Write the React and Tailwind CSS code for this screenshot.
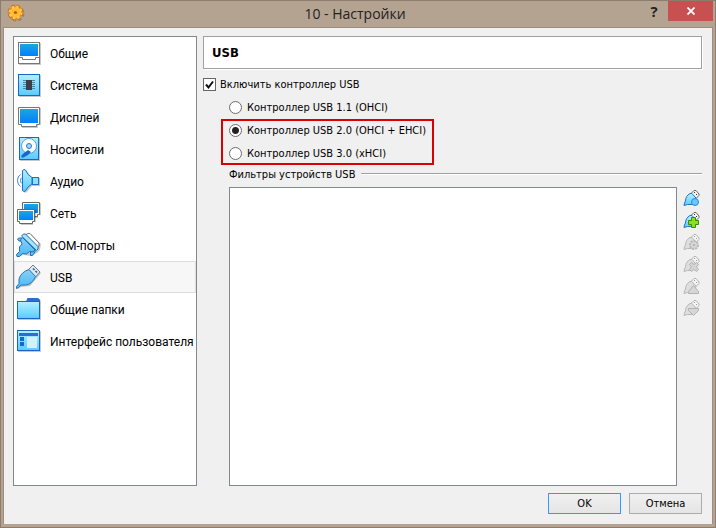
import { useState } from 'react'

function Shadow({ children }) {
  return <g transform="translate(1 1)" fill="#000" opacity="0.22">{children}</g>
}

function GeneralIcon() {
  return (
    <>
      <Shadow><rect x="2" y="2" width="22" height="22" /></Shadow>
      <rect x="2.5" y="2.5" width="21" height="21" fill="#fff" stroke="#777" />
      <rect x="4" y="4" width="18" height="12" fill="url(#screen)" />
      <path d="M3 17.5h3.5v2h13v-2H23" fill="none" stroke="#777" />
    </>
  )
}

function SystemIcon() {
  return (
    <>
      <Shadow><rect x="2" y="2" width="22" height="22" /></Shadow>
      <rect x="2.5" y="2.5" width="21" height="21" fill="url(#cyan)" stroke="#1668c9" />
      <path d="M7 8.5h12M7 10.5h12M7 12.5h12M7 14.5h12M7 16.5h12" stroke="#4e87a6" />
      <rect x="10" y="8" width="6" height="10" fill="#3a3f4a" />
    </>
  )
}

function DisplayIcon() {
  return (
    <>
      <Shadow><path d="M2 3h22v17h-3v3H5v-3H2z" /></Shadow>
      <path d="M2.5 3.5h21v17h-3v2h-15v-2h-3z" fill="#fff" stroke="#777" />
      <rect x="4" y="5" width="18" height="14" fill="url(#screen)" />
    </>
  )
}

function StorageIcon() {
  return (
    <>
      <Shadow><rect x="3" y="1" width="20" height="23" /></Shadow>
      <rect x="3.5" y="1.5" width="19" height="22" fill="url(#cyan)" stroke="#1668c9" />
      <circle cx="13" cy="10" r="7.5" fill="#fff" stroke="#5b9fe0" />
      <path d="m12 14 3 2-3 3-4.500 2.500H5.500v-2L8 17z" fill="#1668c9" />
      <circle cx="13" cy="10" r="2.5" fill="#9fd8f7" stroke="#2b7bd0" />
    </>
  )
}

function AudioIcon() {
  return (
    <>
      <Shadow><path d="M7 1.500h2.500L15 9h8v8h-8l-5.500 6.500H7z" /></Shadow>
      <path d="M4.500 6.500Q1.500 8.500 1.500 12.500T4.500 18.500M6 9.500q-1.500 1-1.500 3t1.500 3" fill="none" stroke="#3a86d8" />
      <path d="M6.500 2.500 8 1.500q1.500 0 2 1.500 1.500 4 6 6.500v6.500q-4.500 2.500-6 6-.5 1.500-2 1.500l-1.500-1z" fill="url(#cyan)" stroke="#1f6fd0" />
      <rect x="16.500" y="9.500" width="6" height="7" fill="#8fe0ff" stroke="#1f6fd0" />
    </>
  )
}

function NetworkIcon() {
  return (
    <>
      <Shadow><path d="M6 2h18v12h-3v3H6z" /></Shadow>
      <path d="M6.500 2.500h17v12h-2v2h-15z" fill="#fff" stroke="#666" />
      <rect x="8" y="4" width="14" height="9" fill="url(#screen)" />
      <Shadow><path d="M1 9h18v12h-3v3H4v-3H1z" /></Shadow>
      <path d="M1.500 9.500h17v12h-2v2h-13v-2h-2z" fill="#fff" stroke="#666" />
      <rect x="3" y="11" width="14" height="9" fill="url(#screen)" />
    </>
  )
}

function SerialIcon() {
  return (
    <>
      <Shadow><path d="m9 1 5 0 10 10-1 6-3 3-6 3-8-1-4 2-1-1 3-5 2-10z" /></Shadow>
      <path d="M9.500 3 12 1.500h2l9 9.500v3l-2 1.500z" fill="#fff" stroke="#777" />
      <path d="M5.500 4 7.500 2h2L22 14.500V17L20.500 18.500z" fill="#a5e2fc" stroke="#1f6fb5" />
      <path d="M1.500 7 3 6h3.500v3H3zM14.500 20l3-3 2 2-3 4.500h-2z" fill="#6cc4f5" stroke="#1f6fb5" />
      <path d="M6.500 5.500 19 18l-2 2-3.500-.5-3 2.500-4-.500L3.500 24.500H1L.5 22.500 3.500 19.500V15L6 12 4.500 8z" fill="url(#plug)" stroke="#1f6fb5" />
    </>
  )
}

function PlugIcon() {
  return (
    <>
      <Shadow><path d="m17 1 7 7-5 6-6 7-9 1-3 2-1-1 3-4 1-8 8-5z" /></Shadow>
      <path d="m12.500 5.500 4.500-4.500 7 7-4.500 5z" fill="#dce8f2" stroke="#6a7f98" />
      <path d="m17 4.500 1.500 1.500M19.500 7 21 8.500" stroke="#44546a" strokeWidth="1.500" />
      <path d="M13 5.500 19.500 12.500Q16 20.500 9.500 21H5L2.500 23.500.5 24.500.500 22.500 3 19.500V15Q5 8 13 5.500z" fill="url(#plug)" stroke="#2a77b8" />
    </>
  )
}

function FolderIcon() {
  return (
    <>
      <Shadow><path d="M1 5h9l2-3h11l1 3v18H1z" /></Shadow>
      <path d="M10 5.500 11.500 2h10.500l2 2v3H10z" fill="#2a6fcf" />
      <rect x="1.500" y="5.500" width="22" height="17" fill="url(#cyan)" stroke="#1a66bd" />
    </>
  )
}

function InterfaceIcon() {
  return (
    <>
      <Shadow><rect x="1" y="2" width="23" height="21" /></Shadow>
      <rect x="1.500" y="2.500" width="22" height="20" fill="url(#cyan)" stroke="#1a66bd" />
      <rect x="3" y="5" width="19" height="3" fill="#2a6fcf" />
      <path d="M4 9h4v4H4zM4 14h4v4H4z" fill="#1468d6" />
      <rect x="11" y="9" width="10" height="11" fill="#d3f1fd" />
    </>
  )
}

const SECTIONS = [
  { name: 'Общие', Icon: GeneralIcon },
  { name: 'Система', Icon: SystemIcon },
  { name: 'Дисплей', Icon: DisplayIcon },
  { name: 'Носители', Icon: StorageIcon },
  { name: 'Аудио', Icon: AudioIcon },
  { name: 'Сеть', Icon: NetworkIcon },
  { name: 'COM-порты', Icon: SerialIcon },
  { name: 'USB', Icon: PlugIcon },
  { name: 'Общие папки', Icon: FolderIcon },
  { name: 'Интерфейс пользователя', Icon: InterfaceIcon },
]

// Small badges drawn over the plug of each filter button
const FILTER_ACTIONS = [
  { id: 'empty', label: 'Добавить пустой фильтр', enabled: true, badge: <circle cx="12" cy="12" r="3.500" fill="#6cc8ff" stroke="#2b86dd" /> },
  { id: 'add', label: 'Добавить фильтр', enabled: true, badge: <path d="M8.500 5.500h4v3h3v4h-3v3h-4v-3h-3v-4h3z" fill="#8be01c" stroke="#3c8a0c" /> },
  { id: 'edit', label: 'Изменить фильтр', enabled: false, badge: <><circle cx="11" cy="11" r="4" fill="#d6d6d6" stroke="#b8b8b8" strokeWidth="2" strokeDasharray="2 1" /><circle cx="11" cy="11" r="1" fill="#aaa" /></> },
  { id: 'remove', label: 'Удалить фильтр', enabled: false, badge: <path d="m6.500 8.500 2-2 2.500 2 2.500-2 2 2-2 2.500 2 2.500-2 2-2.500-2-2.500 2-2-2 2-2.500z" fill="#d4d4d4" stroke="#b2b2b2" /> },
  { id: 'up', label: 'Переместить вверх', enabled: false, badge: <path d="m10.500 7.500 5 6v2h-10v-2z" fill="#d6d6d6" stroke="#b2b2b2" /> },
  { id: 'down', label: 'Переместить вниз', enabled: false, badge: <path d="M5.500 8.500h10v2l-5 5-5-5z" fill="#d6d6d6" stroke="#b2b2b2" /> },
]

function FilterIcon({ enabled, badge }) {
  return (
    <svg viewBox="0 0 17 17" className="block h-[17px] w-[17px]" aria-hidden="true">
      <path d="m8 3.500 3-3h2l3 3.500v1.500l-3 3z" fill="#f4f4f4" stroke={enabled ? '#666' : '#b2b2b2'} />
      <path d="M11 2h1v1h-1zM13 4h1v1h-1z" fill={enabled ? '#333' : '#999'} />
      <path
        d="M7 3.500h2L13 8l-1 4-3 2.500H4.500L1 15.500 1.500 13 2.500 11Q2.500 6 7 3.500z"
        fill={enabled ? 'url(#cyan)' : '#dedede'}
        stroke={enabled ? '#2273c8' : '#b8b8b8'}
      />
      {badge}
    </svg>
  )
}

function TitleBar() {
  return (
    <header className="flex h-[26px] items-start pl-1">
      <svg viewBox="0 0 18 18" className="mt-[3px] h-[18px] w-[18px]" aria-hidden="true">
        <circle cx="9.500" cy="9.500" r="6.500" fill="none" stroke="#7c6a58" strokeWidth="3" strokeDasharray="3 2.100" opacity="0.5" />
        <circle cx="8.500" cy="8.500" r="6.300" fill="none" stroke="#d96a10" strokeWidth="3.400" strokeDasharray="3.300 1.650" />
        <circle cx="8.500" cy="8.500" r="6" fill="#ffba30" stroke="#e8851a" />
        <circle cx="8.500" cy="8.500" r="5.500" fill="none" stroke="#ffc84a" strokeWidth="3" strokeDasharray="2.300 2.020" />
        <circle cx="8.500" cy="8.500" r="1.600" fill="#b9591a" />
      </svg>
      <h1 className="flex-1 pl-[45px] text-center font-['Open_Sans','Noto_Sans',sans-serif] text-[14px] leading-[26px] text-[#222]">10 - Настройки</h1>
      <button type="button" aria-label="Справка" className="h-5 w-7 font-['Open_Sans',sans-serif] text-[15px] leading-5 font-bold text-[#222]">?</button>
      <button type="button" aria-label="Закрыть" className="flex h-5 w-[45px] items-center justify-center bg-[#c75050]">
        <svg viewBox="0 0 8 8" className="h-2 w-2" aria-hidden="true">
          <path d="m.5.5 7 7m0-7-7 7" stroke="#fff" strokeWidth="1.800" />
        </svg>
      </button>
    </header>
  )
}

function Radio({ value, current, onChange, children }) {
  return (
    <label className="flex h-[23px] items-center gap-[5px]">
      <input
        type="radio"
        name="controller"
        checked={value === current}
        onChange={() => onChange(value)}
        className="h-[13px] w-[13px] shrink-0 appearance-none rounded-full border border-[#6b6b6b] bg-white checked:bg-[radial-gradient(circle,#222_3px,#fff_4px)]"
      />
      <span className="whitespace-nowrap">{children}</span>
    </label>
  )
}

export default function App() {
  const [section, setSection] = useState('USB')
  const [enabled, setEnabled] = useState(true)
  const [controller, setController] = useState('2.0')

  return (
    <div className="flex min-h-screen flex-col border border-[#8d7d71] bg-[#b5a392] px-[2px] pb-[3px] font-['DejaVu_Sans_Condensed','DejaVu_Sans',sans-serif] text-[11px] leading-4 text-black">
      <svg className="absolute h-0 w-0" aria-hidden="true">
        <defs>
          <linearGradient id="screen" x1="0" y1="0" x2="0" y2="1">
            <stop offset="0" stopColor="#1ea5e0" />
            <stop offset="1" stopColor="#0080ff" />
          </linearGradient>
          <linearGradient id="cyan" x1="0" y1="0" x2="0" y2="1">
            <stop offset="0" stopColor="#b4f0ff" />
            <stop offset="1" stopColor="#58ccff" />
          </linearGradient>
          <linearGradient id="plug" x1="0" y1="0" x2="0" y2="1">
            <stop offset="0" stopColor="#8cd0f6" />
            <stop offset="1" stopColor="#46b8f8" />
          </linearGradient>
        </defs>
      </svg>

      <TitleBar />

      <div className="flex flex-1 flex-col border-x border-t border-[#a08d7d] bg-[#f0f0f0] pt-2 pr-[10px] pb-[10px] pl-[9px]">
        <div className="flex flex-1 gap-1.5">
          <nav className="w-46 shrink-0 border border-[#828790] bg-white">
            {SECTIONS.map(({ name, Icon }) => (
              <button
                key={name}
                type="button"
                onClick={() => setSection(name)}
                className={`flex h-8 w-full items-center gap-2 border pl-px font-['Roboto','Noto_Sans',sans-serif] text-[12px] whitespace-nowrap ${
                  name === section ? 'border-[#dedede] bg-[#f7f7f7]' : 'border-transparent'
                }`}
              >
                <svg viewBox="0 0 26 26" className="h-[26px] w-[26px] shrink-0" aria-hidden="true"><Icon /></svg>
                <span className="pt-px">{name}</span>
              </button>
            ))}
          </nav>

          <main className="flex min-w-0 flex-1 flex-col">
            <h2 className="h-[33px] border border-[#a0a0a0] bg-white pl-2 text-[13px] leading-[32px] font-bold shadow-[1px_1px_0_#fff]">USB</h2>

            <label className="mt-[5px] flex h-[21px] items-center gap-1">
              <span className="relative h-[13px] w-[13px]">
                <input
                  type="checkbox"
                  checked={enabled}
                  onChange={(e) => setEnabled(e.target.checked)}
                  className="block h-[13px] w-[13px] appearance-none border border-[#666] bg-white"
                />
                {enabled && (
                  <svg viewBox="0 0 13 13" className="pointer-events-none absolute inset-0" aria-hidden="true">
                    <path d="m3 6.500 2.500 3 4.500-6" fill="none" stroke="#111" strokeWidth="2" />
                  </svg>
                )}
              </span>
              <span>Включить контроллер USB</span>
            </label>

            <fieldset disabled={!enabled} className="pt-px pl-[26px]">
              <Radio value="1.1" current={controller} onChange={setController}>Контроллер USB 1.1 (OHCI)</Radio>
              <div className="-ml-2 w-[213px] pl-2 outline-2 -outline-offset-2 outline-[#d80000]">
                <Radio value="2.0" current={controller} onChange={setController}>Контроллер USB 2.0 (OHCI + EHCI)</Radio>
                <Radio value="3.0" current={controller} onChange={setController}>Контроллер USB 3.0 (xHCI)</Radio>
              </div>
            </fieldset>

            <section className="flex flex-1 flex-col pl-[26px]">
              <h3 className="flex h-[22px] gap-1.5 leading-5 whitespace-nowrap">
                Фильтры устройств USB
                <span className="mt-2 h-[2px] flex-1 border-b border-white bg-[#a0a0a0]" />
              </h3>
              <div className="flex flex-1">
                <div className="flex-1 border border-[#828790] bg-white" />
                <div className="flex w-[25px] flex-col gap-[5px] pt-[3px] pl-1.5">
                  {FILTER_ACTIONS.map(({ id, label, enabled: active, badge }) => (
                    <button key={id} type="button" aria-label={label} disabled={!active}>
                      <FilterIcon enabled={active} badge={badge} />
                    </button>
                  ))}
                </div>
              </div>
            </section>
          </main>
        </div>

        <footer className="mt-[7px] flex justify-end gap-2">
          <button type="button" className="h-[21px] w-[73px] border border-[#3399ff] bg-linear-to-b from-[#f0f0f0] to-[#e5e5e5]">OK</button>
          <button type="button" className="h-[21px] w-[73px] border border-[#acacac] bg-linear-to-b from-[#f0f0f0] to-[#e5e5e5]">Отмена</button>
        </footer>
      </div>
    </div>
  )
}
